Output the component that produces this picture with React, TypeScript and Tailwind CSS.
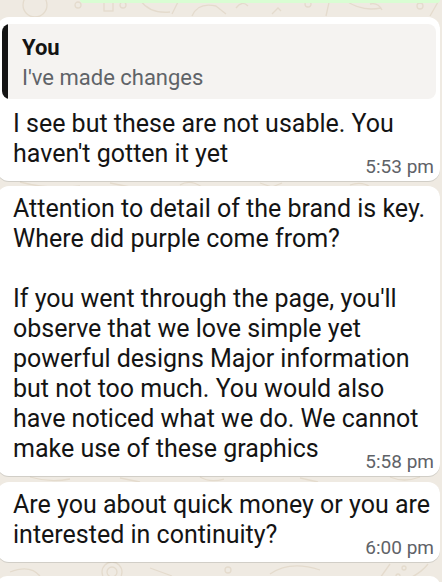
import React from "react";

const font = { fontFamily: "Roboto, 'Noto Sans', sans-serif" };

function Doodles() {
  return (
    <svg
      className="absolute inset-0 h-full w-full"
      viewBox="0 0 442 582"
      fill="none"
      stroke="#e4dbcd"
      strokeWidth="1.3"
    >
      <circle cx="35" cy="5" r="12" />
      <circle cx="78" cy="5" r="3" />
      <rect x="104" y="2" width="9" height="9" />
      <circle cx="123" cy="5" r="3" />
      <path d="M140 0 q10 14 30 12" />
      <path d="M172 14 l8 -16" />
      <path d="M192 16 q6 -14 24 -10 l10 8" />
      <path d="M236 8 q6 -8 12 -2" />
      <path d="M272 14 l6 -6 l3 3" />
      <circle cx="308" cy="4" r="3" />
      <path d="M326 16 l4 -18" />
      <path d="M345 0 q16 12 36 8" />
      <path d="M370 4 q8 -2 12 6" />
      <circle cx="420" cy="6" r="3" />
      <path d="M430 16 l8 -14" />
      <path d="M20 182 q30 8 60 4" />
      <path d="M110 183 l20 4" />
      <path d="M180 185 q10 -6 22 2" />
      <path d="M260 183 l12 4 l10 -4" />
      <path d="M350 185 q12 -4 20 2" />
      <path d="M30 477 q20 6 40 2" />
      <path d="M120 478 l20 4" />
      <path d="M200 477 q10 6 24 2" />
      <path d="M300 478 l18 4" />
      <path d="M390 477 q14 6 30 0" />
      <path d="M10 572 q20 -8 30 4" />
      <circle cx="112" cy="572" r="10" />
      <circle cx="112" cy="572" r="5" />
      <circle cx="228" cy="570" r="3" />
      <path d="M150 568 l22 8" />
      <path d="M270 574 q20 -14 50 -4" />
      <path d="M380 578 l10 -14" />
      <circle cx="404" cy="568" r="2" />
      <circle cx="398" cy="576" r="2" />
      <path d="M410 578 q12 -6 18 -14" />
    </svg>
  );
}

function Time({ t }: { t: string }) {
  return (
    <div className="flex justify-end -mt-[12px] pr-[6px]">
      <span className="text-[19px] leading-[20px] text-[#5f6368]">{t}</span>
    </div>
  );
}

const bubble =
  "-ml-[3px] w-[443px] rounded-[12px] bg-white pb-[4px] shadow-[0_1px_0.5px_rgba(11,20,26,0.13)]";

export default function App() {
  return (
    <div
      className="relative h-[582px] w-[442px] overflow-hidden bg-[#efeae2]"
      style={font}
    >
      <Doodles />
      <div className="relative flex flex-col">
        <div className="ml-[80px] mr-[2px] h-[3px] rounded-b-[6px] bg-[#d9fdd3]" />

        {/* Bubble 1 */}
        <div className={`mt-[14px] pt-[7px] ${bubble}`}>
          <div className="mx-[5px] mr-[4px] flex overflow-hidden rounded-[8px] bg-[#f5f3f1]">
            <div className="w-[6px] bg-[#141414]" />
            <div className="pl-[14px] pt-[9px] pb-[6px] text-[22px] leading-[30px]">
              <div className="font-bold text-[#141414]">You</div>
              <div className="text-[#5f6368]">I&apos;ve made changes</div>
            </div>
          </div>
          <div className="mt-[10px] pl-[16px] text-[25px] leading-[30px] text-[#141414] whitespace-nowrap">
            I see but these are not usable. You
            <br />
            haven&apos;t gotten it yet
          </div>
          <Time t="5:53 pm" />
        </div>

        {/* Bubble 2 */}
        <div className={`mt-[5px] pt-[8px] ${bubble}`}>
          <div className="pl-[16px] text-[25px] leading-[30px] text-[#141414] whitespace-nowrap">
            Attention to detail of the brand is key.
            <br />
            Where did purple come from?
            <br />
            <br />
            If you went through the page, you&apos;ll
            <br />
            observe that we love simple yet
            <br />
            powerful designs Major information
            <br />
            but not too much. You would also
            <br />
            have noticed what we do. We cannot
            <br />
            make use of these graphics
          </div>
          <Time t="5:58 pm" />
        </div>

        {/* Bubble 3 */}
        <div className={`mt-[6px] pt-[8px] ${bubble}`}>
          <div className="pl-[16px] text-[25px] leading-[30px] text-[#141414] whitespace-nowrap">
            Are you about quick money or you are
            <br />
            interested in continuity?
          </div>
          <Time t="6:00 pm" />
        </div>

        <div className="mt-[14px] -ml-[3px] h-[20px] w-[443px] rounded-[12px] bg-white" />
      </div>
    </div>
  );
}
